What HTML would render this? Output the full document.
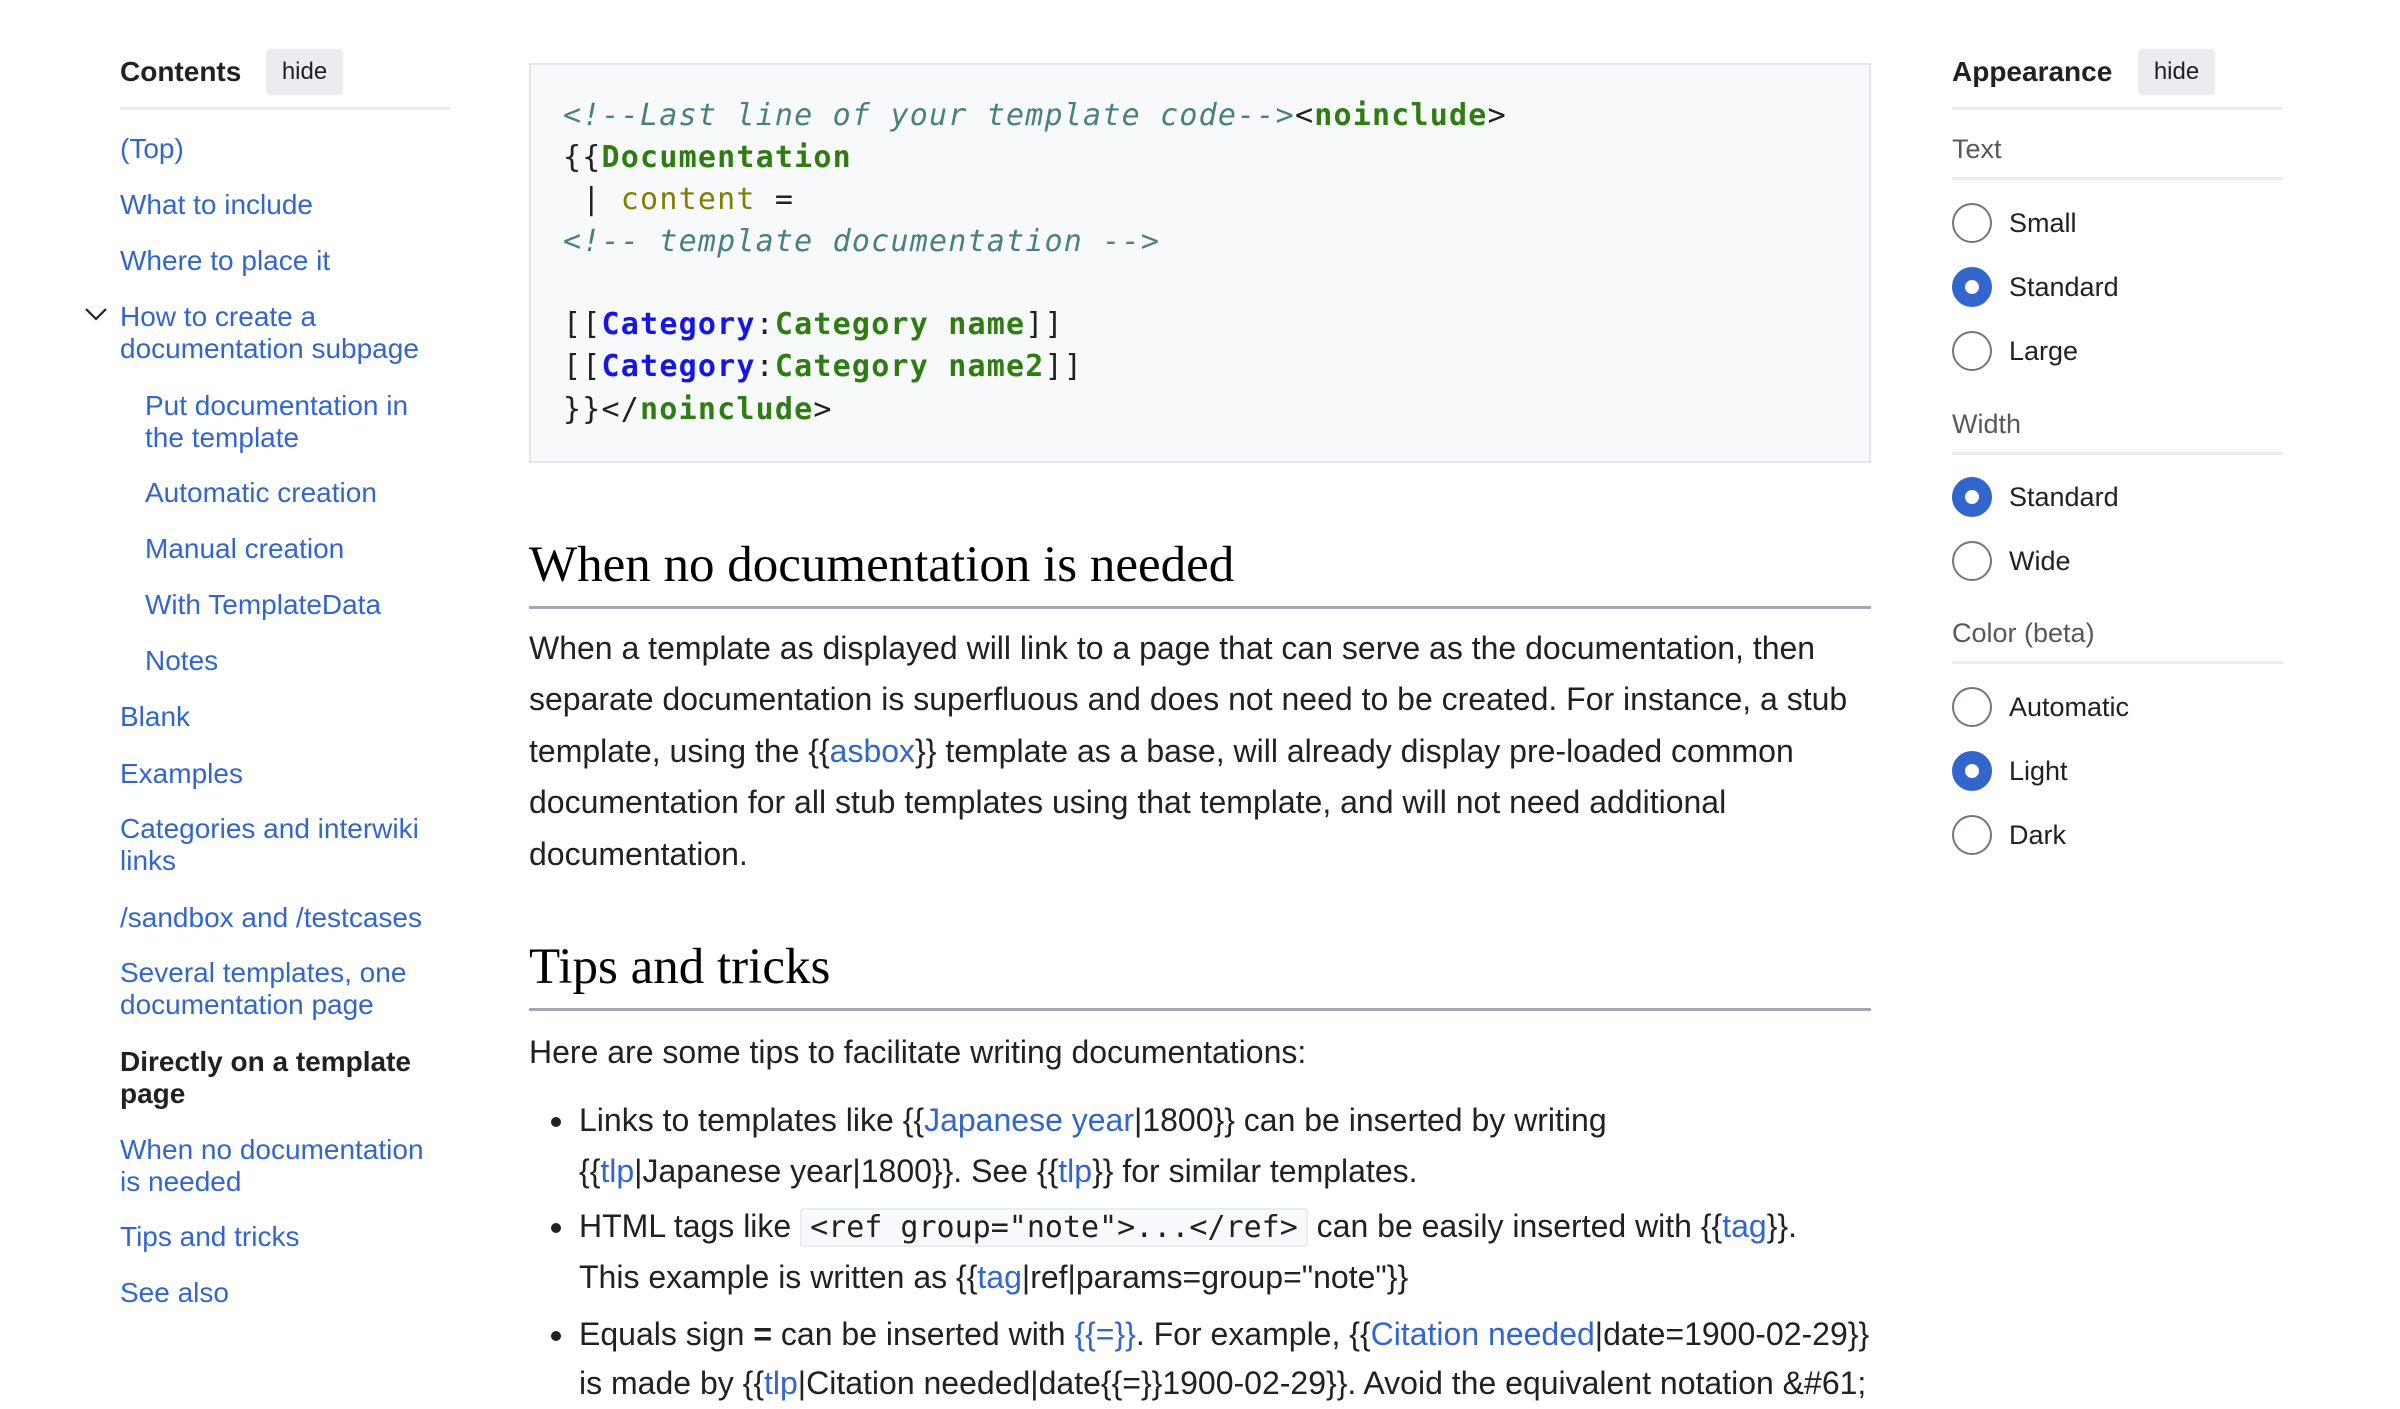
<!DOCTYPE html>
<html><head><meta charset="utf-8"><style>
*{margin:0;padding:0;box-sizing:border-box}
body{width:2400px;height:1398px;overflow:hidden;background:#fff;font-family:"Liberation Sans",Arial,sans-serif;color:#202122;position:relative}
.a{position:absolute;white-space:nowrap}
a,.l{color:#3366cc;text-decoration:none}
.toc{font-size:28px;line-height:32px}
.btn{position:absolute;background:#eaecf0;border-radius:4px;font-size:24px;text-align:center;line-height:46px;color:#202122}
.hr{position:absolute;height:3px;background:#eaecf0}
.code{position:absolute;left:529px;top:63px;width:1342px;height:400px;background:#f8f9fa;border:2px solid #e3e5e8}
.cl{position:absolute;left:563px;font-family:"DejaVu Sans Mono","Liberation Mono",monospace;font-size:30px;line-height:42px;white-space:pre;letter-spacing:1.2px}
.cm{color:#4a8080;font-style:italic}
.g{color:#2f7d12;font-weight:bold}
.b{color:#1515e6;font-weight:bold}
.o{color:#808000}
.h{position:absolute;left:529px;font-family:"Liberation Serif","DejaVu Serif",serif;font-size:51px;line-height:60px;color:#000}
.hl{position:absolute;left:529px;width:1342px;height:3px;background:#a2a9b1}
.p{position:absolute;font-size:32px;line-height:52px;white-space:nowrap}
.r{position:absolute;left:1952px;width:40px;height:40px;border-radius:50%;border:2px solid #72777d;background:#fff}
.r.on{border:13px solid #3366cc}
.rl{position:absolute;left:2009px;font-size:27px;line-height:40px}
.lab{position:absolute;left:1952px;font-size:27px;color:#54595d;line-height:32px}
.dot{position:absolute;left:551px;width:10px;height:10px;border-radius:50%;background:#202122}
.ic{background:#f8f9fa;border:2px solid #eaecf0;border-radius:3px;font-family:"DejaVu Sans Mono","Liberation Mono",monospace;font-size:30px;padding:0 8px}
</style></head><body>

<div class="a" style="left:120px;top:56px;font-size:28px;font-weight:bold;line-height:32px">Contents</div>
<div class="btn" style="left:266px;top:49px;width:77px;height:46px">hide</div>
<div class="hr" style="left:120px;top:107px;width:331px"></div>

<div class="a toc l" style="left:120px;top:133px">(Top)</div>
<div class="a toc l" style="left:120px;top:189px">What to include</div>
<div class="a toc l" style="left:120px;top:245px">Where to place it</div>
<svg class="a" style="left:84px;top:306px" width="24" height="16" viewBox="0 0 24 16"><path d="M2 3 L12 13 L22 3" fill="none" stroke="#202122" stroke-width="2.2"/></svg>
<div class="a toc l" style="left:120px;top:301px">How to create a<br>documentation subpage</div>
<div class="a toc l" style="left:145px;top:390px">Put documentation in<br>the template</div>
<div class="a toc l" style="left:145px;top:477px">Automatic creation</div>
<div class="a toc l" style="left:145px;top:533px">Manual creation</div>
<div class="a toc l" style="left:145px;top:589px">With TemplateData</div>
<div class="a toc l" style="left:145px;top:645px">Notes</div>
<div class="a toc l" style="left:120px;top:701px">Blank</div>
<div class="a toc l" style="left:120px;top:758px">Examples</div>
<div class="a toc l" style="left:120px;top:813px">Categories and interwiki<br>links</div>
<div class="a toc l" style="left:120px;top:902px">/sandbox and /testcases</div>
<div class="a toc l" style="left:120px;top:957px">Several templates, one<br>documentation page</div>
<div class="a toc" style="left:120px;top:1046px;font-weight:bold;color:#202122">Directly on a template<br>page</div>
<div class="a toc l" style="left:120px;top:1134px">When no documentation<br>is needed</div>
<div class="a toc l" style="left:120px;top:1221px">Tips and tricks</div>
<div class="a toc l" style="left:120px;top:1277px">See also</div>

<div class="code"></div>
<div class="cl" style="top:95px"><span class="cm">&lt;!--Last line of your template code--&gt;</span>&lt;<span class="g">noinclude</span>&gt;</div>
<div class="cl" style="top:137px">{{<span class="g">Documentation</span></div>
<div class="cl" style="top:179px"> | <span class="o">content</span> =</div>
<div class="cl" style="top:221px"><span class="cm">&lt;!-- template documentation --&gt;</span></div>
<div class="cl" style="top:304px">[[<span class="b">Category</span>:<span class="g">Category name</span>]]</div>
<div class="cl" style="top:346px">[[<span class="b">Category</span>:<span class="g">Category name2</span>]]</div>
<div class="cl" style="top:389px">}}&lt;/<span class="g">noinclude</span>&gt;</div>

<div class="h" style="top:535px">When no documentation is needed</div>
<div class="hl" style="top:606px"></div>
<div class="p" style="left:529px;top:622px">When a template as displayed will link to a page that can serve as the documentation, then</div>
<div class="p" style="left:529px;top:673px">separate documentation is superfluous and does not need to be created. For instance, a stub</div>
<div class="p" style="left:529px;top:725px">template, using the {{<a>asbox</a>}} template as a base, will already display pre-loaded common</div>
<div class="p" style="left:529px;top:776px">documentation for all stub templates using that template, and will not need additional</div>
<div class="p" style="left:529px;top:828px">documentation.</div>

<div class="h" style="top:937px">Tips and tricks</div>
<div class="hl" style="top:1008px"></div>
<div class="p" style="left:529px;top:1026px">Here are some tips to facilitate writing documentations:</div>
<div class="dot" style="top:1117px"></div>
<div class="p" style="left:579px;top:1094px">Links to templates like {{<a>Japanese year</a>|1800}} can be inserted by writing</div>
<div class="p" style="left:579px;top:1145px">{{<a>tlp</a>|Japanese year|1800}}. See {{<a>tlp</a>}} for similar templates.</div>
<div class="dot" style="top:1223px"></div>
<div class="p" style="left:579px;top:1200px">HTML tags like <span class="ic">&lt;ref group="note"&gt;...&lt;/ref&gt;</span> can be easily inserted with {{<a>tag</a>}}.</div>
<div class="p" style="left:579px;top:1251px">This example is written as {{<a>tag</a>|ref|params=group="note"}}</div>
<div class="dot" style="top:1331px"></div>
<div class="p" style="left:579px;top:1308px">Equals sign <b>=</b> can be inserted with <a>{{=}}</a>. For example, {{<a>Citation needed</a>|date=1900-02-29}}</div>
<div class="p" style="left:579px;top:1357px">is made by {{<a>tlp</a>|Citation needed|date{{=}}1900-02-29}}. Avoid the equivalent notation &amp;#61;</div>

<div class="a" style="left:1952px;top:56px;font-size:28px;font-weight:bold;line-height:32px">Appearance</div>
<div class="btn" style="left:2138px;top:49px;width:77px;height:46px">hide</div>
<div class="hr" style="left:1952px;top:107px;width:331px"></div>

<div class="lab" style="top:133px">Text</div>
<div class="hr" style="left:1952px;top:177px;width:331px"></div>
<div class="r" style="top:203px"></div><div class="rl" style="top:203px">Small</div>
<div class="r on" style="top:267px"></div><div class="rl" style="top:267px">Standard</div>
<div class="r" style="top:331px"></div><div class="rl" style="top:331px">Large</div>

<div class="lab" style="top:408px">Width</div>
<div class="hr" style="left:1952px;top:452px;width:331px"></div>
<div class="r on" style="top:477px"></div><div class="rl" style="top:477px">Standard</div>
<div class="r" style="top:541px"></div><div class="rl" style="top:541px">Wide</div>

<div class="lab" style="top:617px">Color (beta)</div>
<div class="hr" style="left:1952px;top:661px;width:331px"></div>
<div class="r" style="top:687px"></div><div class="rl" style="top:687px">Automatic</div>
<div class="r on" style="top:751px"></div><div class="rl" style="top:751px">Light</div>
<div class="r" style="top:815px"></div><div class="rl" style="top:815px">Dark</div>
</body></html>
